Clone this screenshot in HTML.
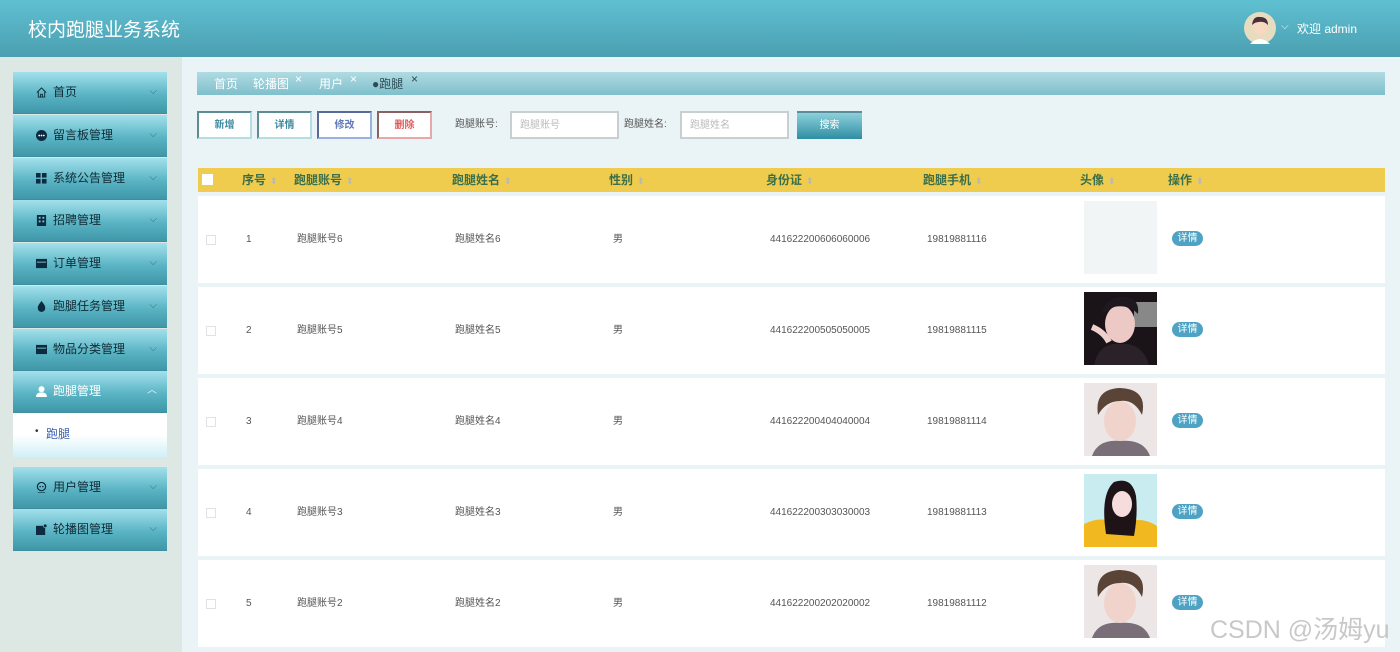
<!DOCTYPE html>
<html><head><meta charset="utf-8"><style>
*{margin:0;padding:0;box-sizing:border-box}
body{width:1400px;height:652px;overflow:hidden;position:relative;font-family:"Liberation Sans","Noto Sans CJK SC",sans-serif;background:#eaf3f5;font-size:12px;color:#555}
.a{position:absolute}
#hd{left:0;top:0;width:1400px;height:57px;background:linear-gradient(#5fc0d2,#4b9fb0);}
#hd .t{left:28px;top:15px;color:#fff;font-size:19px}
#side{left:0;top:57px;width:182px;height:595px;background:#dde8e4}
.mi{position:absolute;left:13px;width:154px;height:42px;background:linear-gradient(#a3e0ec,#5ab4c4 55%,#3f97a8);color:#102a35;font-size:12px;border-bottom:1px solid #3d8e9e}
.mi span.l{position:absolute;left:40px;top:13px;line-height:14px}
.mi .ic{position:absolute;left:23px;top:15px;width:11px;height:11px}
.mi .cv{position:absolute;right:10px;top:14px;font-size:10px;color:#3c6d78;line-height:12px}
.btn{position:absolute;top:111px;width:55px;height:28px;background:#fff;font-size:10px;text-align:center;line-height:25px;border:2px solid;font-weight:bold}
.lab{position:absolute;top:119px;font-size:10px;color:#555;line-height:12px}
.inp{position:absolute;top:111px;width:109px;height:28px;background:#fff;border:2px solid #c8cfd1;font-size:10px;color:#bbb;padding:7px 8px;line-height:12px}
.th{position:absolute;top:173px;font-size:12px;color:#3a6f4a;font-weight:bold;line-height:14px}
.th i{font-style:normal;color:#b9b9b0;font-size:9px;margin-left:4px;font-weight:normal}
.row{position:absolute;left:198px;width:1187px;height:87px;background:#fff}
.row div{position:absolute;top:38px;font-size:10px;color:#555;line-height:12px;height:12px}
.row .cb{left:8px;top:39px;width:10px;height:10px;border:1px solid #e2e2e2}
.row .pic{left:886px;top:5px;width:73px;height:73px;overflow:hidden}
.row .det{left:974px;top:35px;width:31px;height:15px;border-radius:8px;background:#4ea3c4;color:#fff;font-size:10px;text-align:center;line-height:15px}
</style></head><body>
<div id="hd" class="a"><div class="t a">校内跑腿业务系统</div>
<svg class="a" style="left:1244px;top:12px" width="32" height="32" viewBox="0 0 32 32"><circle cx="16" cy="16" r="16" fill="#e6dcc0"/><path d="M6 32 Q16 22 26 32Z" fill="#fff"/><ellipse cx="16" cy="15" rx="7" ry="8" fill="#f7d8c0"/><path d="M8 13 Q9 4 16 5 Q24 5 24 13 Q20 9 15 10 Q11 10 8 13Z" fill="#4a2f3a"/></svg>
<div class="a" style="left:1281px;top:21px;color:#dff;font-size:10px">⌵</div>
<div class="a" style="left:1297px;top:20px;color:#fff;font-size:12px">欢迎 admin</div></div>
<div id="side" class="a"></div>
<div class="mi" style="top:72px"><svg class="ic" viewBox="0 0 12 12"><path d="M1 6 L6 1 L11 6 M2.5 5 V11 H9.5 V5 M5 11 V8 H7 V11" fill="none" stroke="#102a35"/></svg><span class="l">首页</span><span class="cv">⌵</span></div>
<div class="mi" style="top:115px"><svg class="ic" viewBox="0 0 12 12"><circle cx="6" cy="6" r="6" fill="#0d2a40"/><circle cx="3.5" cy="6" r="1" fill="#fff"/><circle cx="6" cy="6" r="1" fill="#fff"/><circle cx="8.5" cy="6" r="1" fill="#fff"/></svg><span class="l">留言板管理</span><span class="cv">⌵</span></div>
<div class="mi" style="top:158px"><svg class="ic" viewBox="0 0 12 12" fill="#0d2a40"><rect width="5" height="5"/><rect x="6.5" width="5" height="5"/><rect y="6.5" width="5" height="5"/><rect x="6.5" y="6.5" width="5" height="5"/></svg><span class="l">系统公告管理</span><span class="cv">⌵</span></div>
<div class="mi" style="top:200px"><svg class="ic" viewBox="0 0 12 12"><rect x="1" width="10" height="12" fill="#0d2a40"/><rect x="3" y="2" width="2" height="2" fill="#7cc"/><rect x="7" y="2" width="2" height="2" fill="#7cc"/><rect x="3" y="6" width="2" height="2" fill="#7cc"/><rect x="7" y="6" width="2" height="2" fill="#7cc"/></svg><span class="l">招聘管理</span><span class="cv">⌵</span></div>
<div class="mi" style="top:243px"><svg class="ic" viewBox="0 0 12 12"><rect y="1" width="12" height="10" fill="#0d2a40"/><rect x="1" y="4" width="10" height="1" fill="#7cc"/></svg><span class="l">订单管理</span><span class="cv">⌵</span></div>
<div class="mi" style="top:286px"><svg class="ic" viewBox="0 0 12 12"><path d="M6 0 Q11 6 10 8 A4 4 0 0 1 2 8 Q1 6 6 0Z" fill="#0d2a40"/></svg><span class="l">跑腿任务管理</span><span class="cv">⌵</span></div>
<div class="mi" style="top:329px"><svg class="ic" viewBox="0 0 12 12"><rect y="1" width="12" height="10" fill="#0d2a40"/><rect x="1" y="4" width="10" height="1" fill="#7cc"/></svg><span class="l">物品分类管理</span><span class="cv">⌵</span></div>
<div class="mi" style="top:371px;color:#fff"><svg class="ic" viewBox="0 0 12 12" fill="#fff"><circle cx="6" cy="3.5" r="3.3"/><path d="M0 12 Q0 7 6 7 Q12 7 12 12Z"/></svg><span class="l">跑腿管理</span><span class="cv" style="color:#e0f4f7">︿</span></div>
<div class="a" style="left:13px;top:413px;width:154px;height:44px;background:linear-gradient(#fff 50%,#d0f0f8)"><span class="a" style="left:22px;top:13px;font-size:10px;color:#333">•</span><span class="a" style="left:33px;top:12px;color:#3a5fb0;font-size:12px">跑腿</span></div>
<div class="mi" style="top:467px"><svg class="ic" viewBox="0 0 12 12"><circle cx="6" cy="5" r="4.5" fill="none" stroke="#0d2a40" stroke-width="1.3"/><path d="M2 12 H10" stroke="#0d2a40" stroke-width="1.3"/><circle cx="4.5" cy="5" r=".8" fill="#0d2a40"/><circle cx="7.5" cy="5" r=".8" fill="#0d2a40"/></svg><span class="l">用户管理</span><span class="cv">⌵</span></div>
<div class="mi" style="top:509px"><svg class="ic" viewBox="0 0 12 12"><rect y="2" width="10" height="10" fill="#0d2a40"/><circle cx="10" cy="2" r="2" fill="#0d2a40" stroke="#6bc" stroke-width=".8"/></svg><span class="l">轮播图管理</span><span class="cv">⌵</span></div>

<div class="a" style="left:197px;top:72px;width:1188px;height:23px;background:linear-gradient(#b0dbe2,#7fbfcc);color:#fff;font-size:12px">
<span class="a" style="left:17px;top:3px">首页</span><span class="a" style="left:56px;top:3px">轮播图</span><span class="a" style="left:98px;top:0px;font-size:12px">×</span>
<span class="a" style="left:122px;top:3px">用户</span><span class="a" style="left:153px;top:0px">×</span>
<span class="a" style="left:175px;top:3px;color:#2c4c55">●跑腿</span><span class="a" style="left:214px;top:0px;color:#2c4c55">×</span></div>

<div class="btn" style="left:197px;border-color:#5e8c93 #b5dde2 #b5dde2 #5e8c93;color:#3f8aa0">新增</div>
<div class="btn" style="left:257px;border-color:#5e8c93 #b5dde2 #b5dde2 #5e8c93;color:#3f8aa0">详情</div>
<div class="btn" style="left:317px;border-color:#5a6a98 #9ab0e0 #9ab0e0 #5a6a98;color:#5f78b8">修改</div>
<div class="btn" style="left:377px;border-color:#8a6060 #e6a8a8 #e6a8a8 #8a6060;color:#e05a5a">删除</div>
<div class="lab" style="left:455px">跑腿账号:</div><div class="inp" style="left:510px">跑腿账号</div>
<div class="lab" style="left:624px">跑腿姓名:</div><div class="inp" style="left:680px">跑腿姓名</div>
<div class="a" style="left:797px;top:111px;width:65px;height:28px;background:linear-gradient(#8dd0dc,#2f8ea2);color:#fff;font-size:10px;text-align:center;line-height:26px;border-top:2px solid #5b8e99">搜索</div>

<div class="a" style="left:198px;top:168px;width:1187px;height:24px;background:#f0cc4e"></div>
<div class="a" style="left:202px;top:174px;width:11px;height:11px;background:#fff"></div>
<div class="th" style="left:242px">序号<i>⬍</i></div><div class="th" style="left:294px">跑腿账号<i>⬍</i></div><div class="th" style="left:452px">跑腿姓名<i>⬍</i></div><div class="th" style="left:609px">性别<i>⬍</i></div><div class="th" style="left:766px">身份证<i>⬍</i></div><div class="th" style="left:923px">跑腿手机<i>⬍</i></div><div class="th" style="left:1080px">头像<i>⬍</i></div><div class="th" style="left:1168px">操作<i>⬍</i></div>

<div class="row" style="top:196px"><span class="cb a"></span><div style="left:48px">1</div><div style="left:99px">跑腿账号6</div><div style="left:257px">跑腿姓名6</div><div style="left:415px">男</div><div style="left:572px">441622200606060006</div><div style="left:729px">19819881116</div><span class="pic a" style="background:#f2f5f6"></span><div class="det">详情</div></div>
<div class="row" style="top:287px"><span class="cb a"></span><div style="left:48px">2</div><div style="left:99px">跑腿账号5</div><div style="left:257px">跑腿姓名5</div><div style="left:415px">男</div><div style="left:572px">441622200505050005</div><div style="left:729px">19819881115</div><svg class="pic a" viewBox="0 0 73 73"><rect width="73" height="73" fill="#1a1418"/><rect x="50" y="10" width="23" height="25" fill="#888"/><ellipse cx="36" cy="32" rx="15" ry="19" fill="#ecc9c4"/><path d="M18 22 Q22 4 40 5 Q56 6 54 22 Q44 12 30 15Z" fill="#201820"/><path d="M10 73 Q15 50 36 52 Q58 50 65 73Z" fill="#2a2228"/><path d="M8 35 Q20 40 25 50" stroke="#f0d0cc" stroke-width="6" fill="none"/></svg><div class="det">详情</div></div>
<div class="row" style="top:378px"><span class="cb a"></span><div style="left:48px">3</div><div style="left:99px">跑腿账号4</div><div style="left:257px">跑腿姓名4</div><div style="left:415px">男</div><div style="left:572px">441622200404040004</div><div style="left:729px">19819881114</div><svg class="pic a" viewBox="0 0 73 73"><rect width="73" height="73" fill="#ece6e6"/><ellipse cx="36" cy="38" rx="16" ry="20" fill="#f0d4cc"/><path d="M14 32 Q10 6 36 5 Q64 6 58 32 Q50 16 36 18 Q22 18 14 32Z" fill="#5a4438"/><path d="M8 73 Q14 56 36 58 Q60 56 66 73Z" fill="#7a6e78"/></svg><div class="det">详情</div></div>
<div class="row" style="top:469px"><span class="cb a"></span><div style="left:48px">4</div><div style="left:99px">跑腿账号3</div><div style="left:257px">跑腿姓名3</div><div style="left:415px">男</div><div style="left:572px">441622200303030003</div><div style="left:729px">19819881113</div><svg class="pic a" viewBox="0 0 73 73"><rect width="73" height="73" fill="#c8ecf0"/><path d="M0 50 Q20 40 36 52 Q55 40 73 52 V73 H0Z" fill="#f2b820"/><path d="M22 60 Q16 20 30 8 Q48 2 52 22 Q54 40 50 62Z" fill="#1e1418"/><ellipse cx="38" cy="30" rx="10" ry="13" fill="#f6dcdc"/></svg><div class="det">详情</div></div>
<div class="row" style="top:560px"><span class="cb a"></span><div style="left:48px">5</div><div style="left:99px">跑腿账号2</div><div style="left:257px">跑腿姓名2</div><div style="left:415px">男</div><div style="left:572px">441622200202020002</div><div style="left:729px">19819881112</div><svg class="pic a" viewBox="0 0 73 73"><rect width="73" height="73" fill="#ece6e6"/><ellipse cx="36" cy="38" rx="16" ry="20" fill="#f0d4cc"/><path d="M14 32 Q10 6 36 5 Q64 6 58 32 Q50 16 36 18 Q22 18 14 32Z" fill="#5a4438"/><path d="M8 73 Q14 56 36 58 Q60 56 66 73Z" fill="#7a6e78"/></svg><div class="det">详情</div></div>
<div class="a" style="left:1210px;top:610px;font-size:25px;color:rgba(190,190,190,.85)">CSDN @汤姆yu</div>
</body></html>
